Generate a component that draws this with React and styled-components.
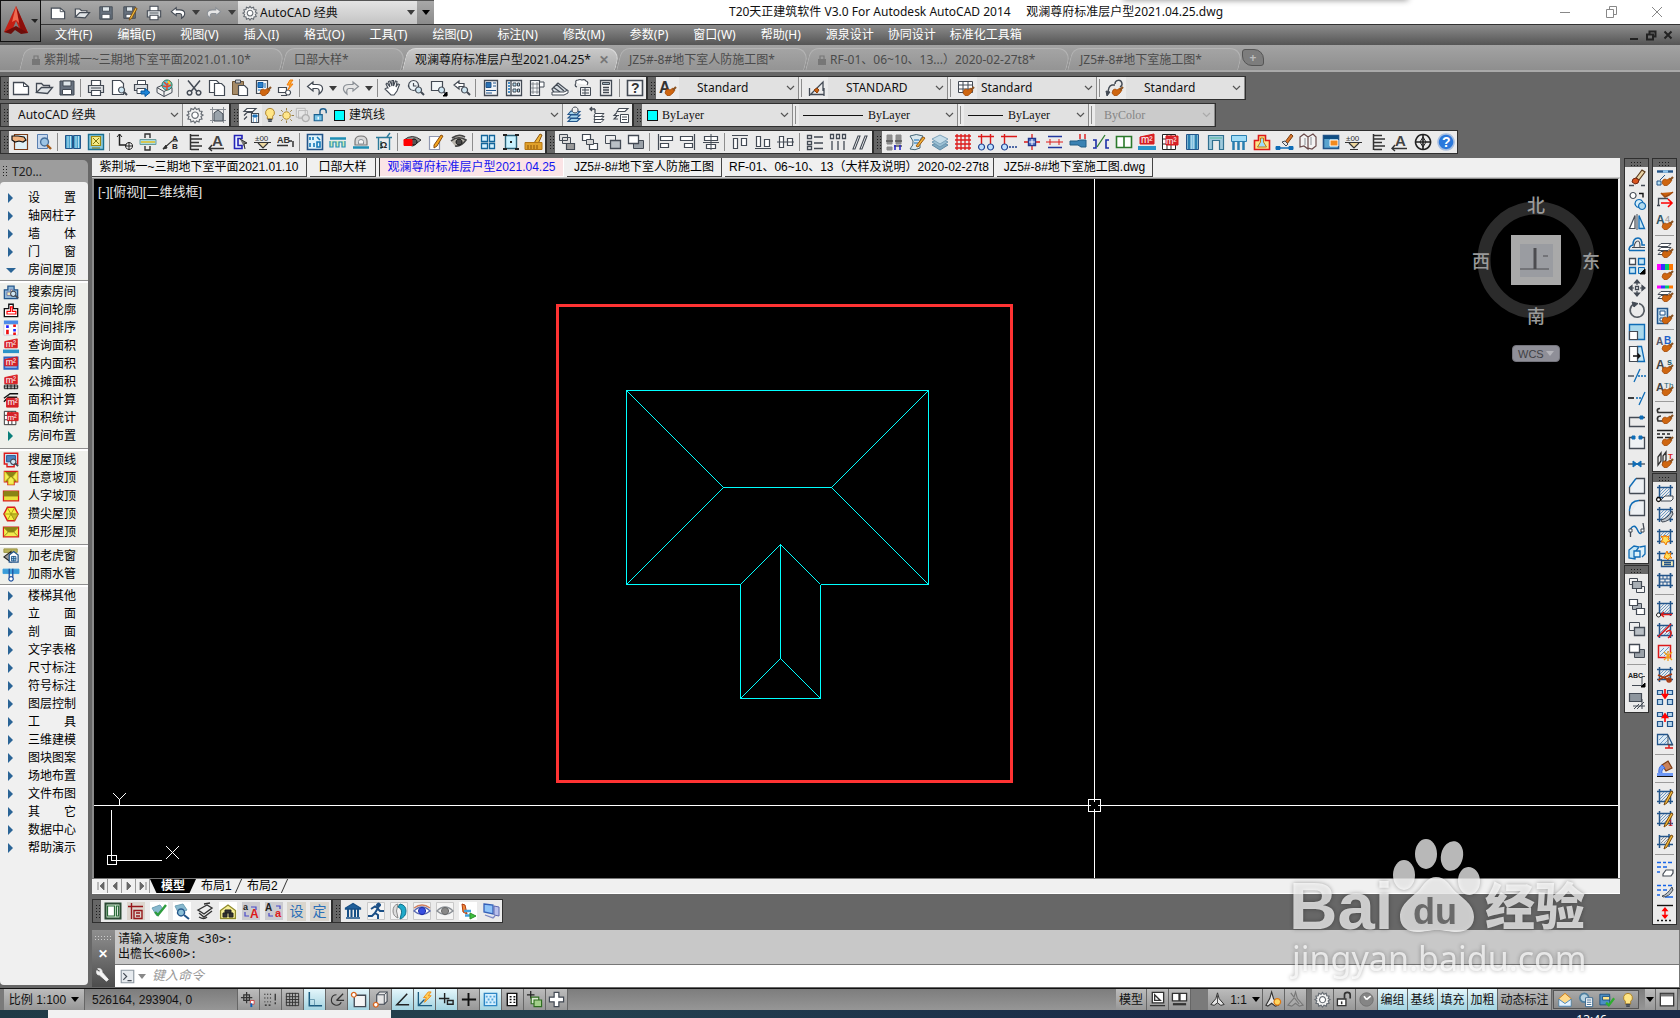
import React from "react";
import styled, { createGlobalStyle, css } from "styled-components";

const UI_FONT = `"Noto Sans", "Noto Sans CJK SC", sans-serif`;
const SONG_FONT = `"Liberation Sans", "Noto Sans CJK SC", sans-serif`;

const K = "#434a54";
const B = "#0f6cb6";
const N = "#23558a";
const L = "#b9e0f2";
const R = "#dc1a1a";
const G = "#8b9096";
const W = "#ffffff";
const GN = "#2c7a2c";

// every shape is [d, stroke, fill, strokeWidth], or { t, x, y, s, c } for a letter
const BRUSH = [
  ["M6 14l1-3 2-1 2 1 3-2 2 2-2 3-3 2.500H8z", "#a34a08", "#cf6610", 0.8],
  ["M14 11l3-3", "#8a5424", "none", 2.2],
];
const LENS = [
  ["M11.500 8a3 3 0 1 0 .1 0z", K, "#cfe6f2", 1.2],
  ["M14 13l3 3", K, "none", 2],
];
const FRAME = [
  ["M3.500 1v15M14.500 1v15M1 3.500h16M1 13.500h16", N, "none", 1.5],
  ["M4 8l4-4M4 11l7-7M5 13l9-9M8 13l6-6M11 13l3-3", "#6c98c4", "none", 1],
];
const PENCIL = [["M9 14l6-11 2 1-6 11-3 2z", "#7a4a10", "#f2bd3c"]];
const M2 = [
  ["M2 4l14-3v10H2z", R, "#d5222a"],
  { t: "m²", x: 3, y: 10, s: 10, c: W },
];
const SQUARES = [
  ["M1.500 2.500h8v6h-8z", K, "#f4f4f4"],
  ["M8.500 10.500h8v6h-8z", K, "#f4f4f4"],
];
const LAYERS = [["M5 2.500h10l-3 3H2zM5 6.500h10l-3 3H2zM5 10.500h10l-3 3H2z", K, W]];

const ICONS = {
  new: [["M1.500 3.500h10l5 4v8h-15z", K, W, 1.3], ["M11.500 3.500v4h5", K]],
  open: [["M1.500 13.500v-9h5l2 2h6v2", K, "#eee", 1.3], ["M1.500 13.500l5-5h11l-5 6z", K, "#dfe3e6", 1.3]],
  save: [["M2 2h14v14H2z", K, "#67717e"], ["M5 2h8v5H5z", K, "#dfe6ea"], ["M4.500 10.500h9v5h-9z", K, W]],
  saveas: [["M2 2h13v13H2z", K, "#67717e"], ["M5 2h7v5H5z", K, "#dfe6ea"], ["M4.500 10.500h8v4h-8z", K, W], ...PENCIL],
  print: [["M4.500 7V1.500h9V7", K, W, 1.2], ["M1.500 6.500h15v7h-15z", K, "#dde0e3", 1.2], ["M4.500 11.500h9v5h-9z", K, W, 1.2], ["M4 9h10", K]],
  preview: [["M2.500 1.500h8l3 3v11h-11z", K, W, 1.2], ...LENS],
  publish: [["M4.500 6V1.500h8V6", K, W], ["M1.500 5.500h13v6h-13z", K, "#dde0e3", 1.2], ["M4 9.500h8v5H4z", K, W], ["M8 12h4v-2.500l5 4-5 4V15H8z", "#0758a0", "#1b83d6"]],
  globe: [["M1 8.500l7-3 8 3v5l-8 4-7-4z", K, "#f0f0f0"], ["M1 8.500l7 4 8-4M8 12.500v5", K], ["M11 1a5 5 0 1 0 .1 0z", "#27784e", "#62c2df"], ["M8 3l3 3 3-4M11 6v5M7 7l4 1 4-2", "#e4492a", "none", 1.5], ["M12 2l2 3", "#f4d42d", "none", 2]],
  cut: [["M3 1.500l9 11M15 1.500l-9 11", K, "none", 1.5], ["M4.500 11.500a2.300 2.300 0 1 0 .1 0zM13.500 11.500a2.300 2.300 0 1 0 .1 0z", K, "none", 1.5]],
  copy: [["M1.500 1.500h7l3 3v9h-10z", K, W, 1.2], ["M6.500 4.500h7l3 3v9h-10z", K, W, 1.2]],
  paste: [["M1.500 2.500h11v13h-11z", "#6d5333", "#a58a66"], ["M4.500 1h5v3h-5z", K, "#ccc"], ["M7.500 6.500h6l3 3v7h-9z", K, W, 1.2]],
  match: [["M2.500 1.500h11v13h-11z", K, "#f5f7f9", 1.2], ["M4 3.500h5v5H4z", "#0b5aa4", "#2a7fca"], ["M11 4v5M4 11h4", B], ...BRUSH],
  blockedit: [["M1.500 8.500h8v5h-8zM4 16.500h6", K, W, 1.2], ["M11 11a2.500 2.500 0 1 0 .1 0z", K, W, 1.2], ["M13 1l-3 5h3l-2 5 5-6h-3l3-4z", "#ef7b10", "#ffae2a"]],
  undo: [["M7 3L1.500 7.500 7 12V9.500h4q3 0 2 5.500 4-3 3.500-6Q16 5.500 11 5.500H7z", K, W, 1.2]],
  redo: [["M11 3l5.500 4.500L11 12V9.500H7q-3 0-2 5.500Q1 12 1.500 9 2 5.500 7 5.500h4z", G, "#e6e6e6", 1.2]],
  hand: [["M4 9L2 5l1-1 3 4L4.500 2.500 6 2l2 5V1.500h1.500V7l2-5 1.500.500L12 8l2-3 1.500.500L13 12l-3 4H7L1 10l1.500-1z", K, W, 1.1]],
  zoomrt: [["M6.500 1.500a5 5 0 1 0 .1 0zM6.500 4v3h3", K, "#eef3f6", 1.2], ...LENS],
  zoomwin: [["M1.500 2.500h11v9h-11z", K, "#f2f6f8", 1.2], ...LENS, ["M17 13v4h-4z", "#000", "#000"]],
  zoomprev: [["M6 2L1 6l5 4V7.500h5v-3H6z", K, W, 1.2], ...LENS],
  props: [["M2.500 1.500h13v15h-13z", K, "#f3f5f7", 1.3], ["M4 3.500h5v5H4z", N, "#2a72b5"], ["M11 4h3M11 7h3M4 11.500h10M4 14h6", N]],
  center: [["M1.500 1.500h15v15h-15zM6 2v14", K, "#f6f8fa", 1.3], ["M3 4h2M3 7h2M3 10h2M3 13h2", B, "none", 1.5], ["M8 4h3v3H8zM12.500 4h2v3h-2zM8 10h3v3H8zM12.500 10h2v3h-2z", K, L]],
  palette: [["M2.500 1.500h9v15h-9z", K, "#f6f8fa", 1.2], ["M4 4h2v2H4zM8 4h2v2H8zM4 8h2v2H4zM8 8h2v2H8zM4 12h2v2H4zM8 12h2v2H8z", G, "#d8dde2"], ["M12 3h4v5h-4", K, W]],
  sheet: [["M1 10l6-6 9 7-3 4H4zM2 8l7 5M5 5l8 7", K, "#d6dce1", 1.2], ["M1 13h12l4-2v3l-4 2H1z", K, W]],
  markup: [["M2 4q-1-3 2-3 2-1 4 0 3-1 4 1 3 1 1 4M2 4q-2 3 1 4", K, W, 1.2], ["M6.500 8.500h10v8h-10zM8 11h7M8 14h7M11 9v7", K, "#f0f0f0"]],
  calc: [["M3.500 1.500h11v15h-11z", K, "#f4f4f4", 1.3], ["M5.500 3.500h7v2h-7z", K, "#9fb0bc"], ["M6 8.500h6M6 11h6M6 13.500h6", K, "none", 1.4]],
  help: [["M1.500 1.500h15v15h-15z", K, "#f7f7f7", 1.6], { t: "?", x: 5, y: 14, s: 14, c: "#333", b: true }],
  astyle: [{ t: "A", x: 0, y: 14, s: 16, c: "#333", b: true }, ...BRUSH],
  dimstyle: [["M1 15.500h15M1.500 9v8M16 9v8M3 15l12-12v9", K, "none", 1.3], ["M6 11l3-2 2 2-2 3z", "#8f3f08", "#c9600f"]],
  tablestyle: [["M1.500 2.500h14v11h-14zM2 6h13M2 10h13M6 3v10M11 3v10", K, W], ...BRUSH],
  leaderstyle: [["M2 15q0-8 4-9h3M9 5a3.500 3.500 0 1 1 5 3", K, "none", 1.4], ["M0 12l4 1-3 4z", K, K], ...BRUSH],
  gear: [["M9 1.500l1.500 2 2.500-1 .500 2.500 2.500.500-1 2.500 2 1-2 1.500 1 2.500-2.500.500-.500 2.500-2.500-1L9 17l-1.500-2-2.500 1-.500-2.500L2 13l1-2.500-2-1.500 2-1-1-2.500L4.500 5 5 2.500l2.500 1z", "#666c73", "#f3f3f3", 1.2], ["M9 6a3.200 3.200 0 1 0 .1 0z", "#666c73", W, 1.2]],
  wssave: [["M1 3.500h16M1 14.500h16M3.500 1v16M14.500 1v16", G, "none", 1], ["M5 15V7l4-3 5 4v7z", K, "#9aa3ab"]],
  layerprop: [["M5 2.500h9l-3 3H2zM5 6.500h6M2 9.500l3-3M2 13.500l3-3", K, W, 1.2], ["M9.500 7.500h7v9h-7z", K, W, 1.2], ["M11 9h4v2h-4zM11 13h1M14 13h1M11 15h1M14 15h1", "#1769ad", "#2a82cc"]],
  bulb: [["M9 1.500a5 5 0 0 0-3 9v3h6v-3a5 5 0 0 0-3-9z", "#a77a20", "#ffe585"], ["M6.500 14h5M7 16h4", K, "none", 1.6]],
  sun: [["M9 4.500a4.500 4.500 0 1 0 .1 0z", "#b08a2c", "#ffe68a", 1.2], ["M9 0v3M9 15v3M0 9h3M15 9h3M2.500 2.500l2 2M13.500 13.500l2 2M2.500 15.500l2-2M13.500 4.500l2-2", "#9a8248", "none", 1.2]],
  vpfreeze: [["M1.500 1.500h10v10h-10zM4 4h10v9H4z", "#b6b6b6", "#e6e6e6"], ["M12 8.500a4 4 0 1 0 .1 0z", "#b0b0b0", "#ddd", 1.5]],
  unlock: [["M2.500 8.500h9v7h-9z", "#1b5f8e", "#79c5e8", 1.3], ["M9 8V5q0-3 3.500-3T16 5v2", "#1b5f8e", "none", 1.6], ["M7 11v3", W, "none", 1.5]],
  laystate: [["M5 5l9 .500-3 3H2zM5 9h9l-3 3H2zM5 12.500h9l-3 3H2z", N, "#a7d5ec", 1.1], ["M9 1a3 3 0 1 0 .1 0z", K, "#eee"]],
  layprev: [["M6 7.500h9l-3 3H5zM6 10.500h9l-3 3H5zM6 13.500h9l-3 3H5z", K, W, 1], ["M1 3h5M3 1L1 3l2 2M6 3v4", K, "none", 1.3]],
  layman: [["M7 2.500h9l-3 3H5zM5 6.500l-3 3h5M5 10l-3 3h4", K, W, 1.1], ["M8.500 8.500h8v8h-8zM10 11h5M10 13.500h5", K, W]],
  handcard: [["M2.500 1.500h13v15h-13z", "#7a3c18", "#dff0f7", 1.2], ["M0 3h6l6 1 2 3-3 2-4-1-4 1-3-2z", "#111", "#f2b37f", 1.2]],
  findcard: [["M2.500 1.500h10v14h-10z", "#5a7fb0", "#c5d8ee"], ["M9.500 5a4 4 0 1 0 .1 0z", "#456f9c", "#9dc5e5", 1.4], ["M12 12l4 4", "#a35a18", "none", 2.4]],
  columns: [["M1.500 2.500h7v13h-7zM9.500 2.500h7v13h-7z", N, "#4ba3cc"], ["M4 3v12M6.500 3v12M12 3v12M14.500 3v12", L, "none", 1]],
  colbox: [["M1.500 1.500h15v15h-15z", "#1b6f91", "#8bc9dc", 1.4], ["M4.500 3.500h9v9h-9z", "#a08a10", "#f6ec88", 1.2], ["M6 5l6 6M12 5l-6 6M5 15h8", "#7d7510"]],
  axis: [["M3.500 1v11h7", "#222", "none", 1.5], ["M1 4l2.500-3L6 4", "#222"], ["M13 9.500a3.500 3.500 0 1 0 .1 0zM13 9v8M9 13h8", "#222"]],
  beam: [["M1 6.500h16v5H1z", "#6b9c9c", "#a7dbe2"], ["M2 9h14", "#d6c654", "none", 2], ["M6 5V1h5v4M6 13v4h5v-4", "#333", "none", 1.4]],
  aleader: [["M1 16l9-8h6", "#333", "none", 1.2], ["M1 16l3-4 1 3z", "#333", "#333"], { t: "A", x: 10, y: 8, s: 8, c: "#222", b: true }, { t: "B", x: 10, y: 16, s: 8, c: "#222", b: true }],
  eline: [["M5.500 1v16M6 2.500h8M6 6h11M6 9.500h8M6 13h11M6 16.500h8", "#333", "none", 1.5]],
  auline: [{ t: "A", x: 4, y: 13, s: 15, c: "#444", b: true }, ["M1 15.500h15M4 12l-3 3.500L4 18", "#333", "none", 1.4]],
  bluearrow: [["M11 2.500H3.500v13H11v-3H7v-7h4z", "#2424b8", "#e8f2ff", 1.6], ["M9 6l7 4-3 1 1 5", "#333", "#777"]],
  elev: [{ t: "±00", x: 1, y: 8, s: 8, c: "#333" }, ["M0 9.500h17", "#333"], ["M4 10l5 5 5-5M5 16.500h8", "#333", "#eed8a0", 1.2]],
  abtag: [{ t: "AB", x: 0, y: 10, s: 9, c: "#333", b: true }, ["M0 12.500h11M12 8h3M16 8v6", "#333", "none", 1.5]],
  planwin: [["M1.500 1.500h15v15h-15z", N, "#dff3fb", 1.6], ["M4 4v3M7 4v3M4 10v4M8 10v4M11 4l3 3M11 9h3v5h-3z", "#147ab8", "none", 1.6]],
  wave: [["M1 5.500h16", "#1f8fb5", "none", 2.5], ["M1 8v6h3V9h3v5h3V9h3v5h3V8", "#1f8fb5", "#cfe9b2", 1.2]],
  lamp: [["M3 12V8q0-5 6-5t6 5v4z", "#777", "#d8d8d8", 1.2], ["M6.500 11V8.500q0-2 2.500-2t2.500 2V11z", G, "#f4f4f4"], ["M1 14.500h16", "#1f8fb5", "none", 2.5]],
  omega: [["M1 4.500h16M3.500 5v12M14.500 5v12M6 16V8M12 4l3-4", "#2b7a9a", "none", 1.4], { t: "Ω", x: 5, y: 15, s: 9, c: "#222", b: true }],
  redeye: [["M0 7q8-7 17 0l-8 6-5-1z", "#333", "#8f8d8a"], ["M10 6a3 3 0 1 0 .1 0z", "#111", "#555"], ["M0 6.500h8v6H0z", "#f00", "#f00"]],
  notepen: [["M2.500 3.500h10v13h-10z", "#8f97b0", W, 1.2], ["M7 12l7-10 2 1-6 10-3 2z", "#8a4d0f", "#f4a51e"]],
  eye: [["M1 8q7-6 15-1-5 7-11 6M2 5q7-5 13-1", "#444", "#b9b5ac", 1.6], ["M9 6a3 3 0 1 0 .1 0z", "#111", "#4a4a4a"]],
  fourwin: [["M2.500 2.500h6v6h-6zM10.500 2.500h5v6h-5zM2.500 10.500h6v5h-6zM10.500 10.500h5v5h-5z", "#12659a", "#d3f1ff", 1.3]],
  dotbox: [["M3.500 2.500h11v13h-11z", "#2a6177", "#c9f2ff", 1.4], ["M1 2h4M1 16h4M13 2h4M13 16h4M9 8v2", "#222", "none", 2]],
  broom: [["M9 10l6-9 2 1-4 9z", "#8b5208", "#efb73c"], ["M0 9.500h17v7H0z", "#b57614", "#e0a02a"], ["M3 12v4M6 12v4M9 12v4M12 12v4", "#8b5208"]],
  front1: [["M1.500 1.500h8v6h-8zM4.500 4.500h8v6h-8z", K, "#ddd"], ["M8.500 10.500h8v6h-8z", K, "#999", 1.2]],
  front2: [["M1.500 1.500h8v6h-8zM8.500 10.500h8v6h-8z", K, W, 1.2], ["M5.500 6.500h7v5h-7z", K, "#d5d5d5"]],
  front3: [["M1.500 2.500h10v8h-10z", K, "#eee"], ["M6.500 7.500h10v8h-10z", K, "#b9bfc5", 1.3]],
  front4: [["M6.500 7.500h10v8h-10z", K, "#9aa1a8"], ["M1.500 2.500h10v8h-10z", K, W, 1.3]],
  alignl: [["M2.500 1v16M4.500 3.500h12v4h-12zM4.500 10.500h8v4h-8z", K, W, 1.2]],
  alignr: [["M15.500 1v16M1.500 3.500h12v4h-12zM5.500 10.500h8v4h-8z", K, W, 1.2]],
  alignc: [["M2.500 3.500h13v4h-13zM4.500 11.500h9v4h-9z", K, W, 1.2], ["M9 1v16M1 9.500h16", K]],
  alignt: [["M1 2.500h16M2.500 5.500h4v10h-4zM10.500 5.500h5v7h-5z", K, W, 1.2]],
  alignb: [["M1 15.500h16M2.500 3.500h4v10h-4zM10.500 6.500h5v7h-5z", K, W, 1.2]],
  alignm: [["M2.500 3.500h4v11h-4zM10.500 5.500h5v7h-5z", K, W, 1.2], ["M0 9h17", K]],
  distl: [["M1.500 2.500h4v3h-4zM1.500 8.500h4v3h-4zM1.500 13.500h4v3h-4zM8 4h9M8 10h9M8 15.500h9", K, W, 1.3]],
  distt: [["M1.500 1.500h3v4h-3zM7.500 1.500h3v4h-3zM13.500 1.500h3v4h-3zM3 8v9M9 8v9M15 8v9", K, W, 1.3]],
  slashes: [["M1 16l5-13h2L3 16zM8 16l5-13h2l-5 13z", K, W, 1.1]],
  graycols: [["M2 2h5v9H2zM11 2h5v9h-5zM2 14h5v3H2z", "#888", "#8e8e8e"], ["M1 8h7M10 8h7M9 13h8", "#555", "none", 1.5], ["M10 12v5M15 12v5", "#22c", "none", 1.5]],
  scroll: [["M2 3q6-3 13 0l-3 4v8q-5 3-10 1 4-4 3-8z", "#467", "#dbe9ee"], ["M6 7h5M6 10h5", B], ["M8 13l7-9 2 1-7 9z", "#a05a10", "#f0b23a"]],
  stack: [["M1 12l8-4 8 4-8 5z", "#5f8aa6", "#7fa9c0"], ["M1 9l8-4 8 4-8 5z", "#6f98b2", "#9cc1d4"], ["M1 6l8-4 8 4-8 5z", "#7fa4bb", "#c5dde9"]],
  redgrid: [["M3 1v16M7 1v16M11 1v16M15 1v16M1 3h16M1 7h16M1 11h16M1 15h16", R, "none", 1.3]],
  redaxis2: [["M1 3.500h16M4.500 1v10M13.500 1v10", R, "none", 1.4], ["M4.500 11a3 3 0 1 0 .1 0zM13.500 11a3 3 0 1 0 .1 0z", "#1d3f8f", "#bfe1ff", 1.2]],
  redaxis1: [["M1 3.500h16M4.500 1v10", R, "none", 1.4], ["M4.500 11a3 3 0 1 0 .1 0z", "#1d3f8f", "#bfe1ff", 1.2], ["M9 14h2M12 14h2M15 14h2", "#1d3f8f", "none", 1.4]],
  cross: [["M9 1v16M1 9h16", R, "none", 1.3], ["M5.500 5.500h7v7h-7z", "#22388f", "#5b79c9", 1.4], ["M9 6v6M6 9h6", W]],
  dashline: [["M2 3.500h14M2 14.500h14", "#22389f", "none", 1.6], ["M0 9h17M4 6v6M13 6v6", R]],
  pipeline: [["M1 8h7l3-1h6v7h-5l-3-2H1z", "#235e86", "#3b82b3"], ["M11 1v5M16 1v5", R, "none", 1.4]],
  bracket: [["M1 7h3v8H1M17 7h-3v8h3", "#1d2fa8", "none", 1.6], ["M5 14L13 2", GN, "none", 1.3]],
  twobox: [["M1.500 3.500h15v11h-15zM9 3.500v11", GN, W, 1.6]],
  m2: [...M2, ["M0 15h18", "#2a93c9", "none", 4]],
  m2grid: [["M1.500 1.500h13v15h-13zM2 6h13M2 11h13M6 2v14M10 2v14", "#222", W], ["M5 3h12v9H5z", R, "#d5222a"], { t: "m²", x: 5, y: 11, s: 9, c: W }],
  wcol1: [["M2.500 1.500h12v15h-12z", N, "#cdeaf5"], ["M5 2v14M12 2v14", "#2a7fb0", "none", 3], ["M8.500 2v14", "#7fbfe0", "none", 2]],
  wcol2: [["M1.500 16.500v-14h15v14h-4v-9h-7v9z", "#31708f", "#9fc9dc", 1.2], ["M3 5h12", "#5b9", "none", 1]],
  wcol3: [["M1.500 2.500h15v6h-15z", "#2a7fb0", "#9fdcf7"], ["M3.500 8v9M8.500 8v9M13.500 8v9", "#2a7fb0", "none", 2.5]],
  stamp: [["M5.500 7.500v-5h7v5h4v9h-15v-9z", R, "#fbe58a", 1.6], ["M7.500 5v4l-3 5h9l-3-5V5z", "#c07a10", "#9fdcf7"]],
  brushline: [["M9 9l6-8 2 2-6 8z", "#7a4010", "#d8742c"], ["M6 9l3-1 3 3-2 2z", K, "#e6e6e6"], ["M0 15h17", B, "none", 1.5], ["M0 13.500h4v3H0zM13 13.500h4v3h-4z", B, B]],
  book: [["M1 4l4-3 4 3v12l-4-3-4 1zM9 4l5-3 3 3v9l-4 3-4-1z", "#6a4b4b", "#f3f3f3", 1.2], ["M6 5v7M12 4v8", G]],
  winorange: [["M1.500 2.500h15v13h-15z", N, "#5aa4cf", 1.6], ["M2 4.500h14", "#0f4f84", "none", 3], ["M8 7h8v6H8z", "#fff", "#f28a1e"]],
  circlecross: [["M9 1.500a7.500 7.500 0 1 0 .1 0zM9 1v16M1 9h16", "#222", "none", 1.6], ["M6 9l3-5 3 5-3 5z", "#222", "none", 1]],
  qmark: [["M9 1a8 8 0 1 0 .1 0z", "#a9bfe0", "#2a78dc", 1.6], { t: "?", x: 5, y: 14, s: 14, c: W, b: true }],
  erase: [["M8 9l6-8 3 2-6 8z", "#5c3b1c", "#e9d3a5", 1.2], ["M5 10l3-1 3 2-1 3-3 1-3-2z", "#6d2410", "#d9551f"], ["M1 16.500h5M13 16.500h4", K, "none", 1.3]],
  copyobj: [["M5 1.500a3 3 0 1 0 .1 0z", K, W, 1.2], ["M11 2.500h4v4", "#111", "none", 1.4], ["M11 8.500a4 4 0 1 0 .1 0z", B, "#d5edf8", 1.2], ["M14 11.500a3.500 3.500 0 1 0 .1 0z", B, "#b2dbf0", 1.2]],
  mirror: [["M7 2.500L1.500 15.500H7z", K, W, 1.2], ["M9 1v16", K], ["M11 2.500l5.500 13H11z", B, "#c6e6f5", 1.3]],
  offset: [["M1 15.500h16M1 15q0-4 4-5 0-7 5-7 4 0 4 7h3", B, "none", 1.5], ["M4 12.500h13M6 12q1-6 4-6 2 0 2 6", K, "none", 1.1]],
  array: [["M1.500 1.500h6v6h-6z", K, W, 1.3], ["M10.500 1.500h6v6h-6zM1.500 10.500h6v6h-6z", B, "#c6e6f5", 1.3], ["M10.500 10.500h6v6h-6z", B, L], ["M17 12v5h-5z", "#000", "#000"]],
  move: [["M7.500 7.500h3v3h-3z", K, W, 1.3], ["M9 1l2.500 3h-5zM9 17l2.500-3h-5zM1 9l3-2.500v5zM17 9l-3-2.500v5zM9 3v3M9 12v3M3 9h3M12 9h3", K, K, 1.2]],
  rotate: [["M6 3a7 7 0 1 0 5-.500", "#555b62", "none", 1.7], ["M4 1l6 1.500L6 6z", K, K]],
  scale: [["M1.500 1.500h15v15h-15z", B, "#a9d8ec", 1.4], ["M1.500 8.500h8v8h-8z", K, W, 1.2]],
  stretch: [["M9.500 1.500h4l3 15h-7z", B, "#c6e6f5", 1.3], ["M1.500 1.500h8v15h-8z", K, W, 1.2], ["M5 11h7M9.500 8.500L12 11l-2.500 2.500", "#111", "none", 1.4]],
  trim: [["M0 9h6", K, "none", 1.4], ["M6 15l6-13", B, "none", 1.3], ["M10 9h2M13 9h2M16 9h2", B, "none", 1.3]],
  extend: [["M0 9h6", "#111", "none", 1.6], ["M8 9h2M11 9h2", B, "none", 1.4], ["M11 16l6-13", B, "none", 1.3]],
  breakpt: [["M17 6.500H1.500v9H17", K, "none", 1.3], ["M12 5h3v3h-3z", B, B]],
  breakobj: [["M5 4.500H1.500v11h15v-11H13", K, "#eef1f4", 1.3], ["M4 3h3v3H4zM11 3h3v3h-3z", B, B]],
  join: [["M0 9h17", K, "none", 1.3], ["M5 6l4 3-4 3zM13 6L9 9l4 3z", B, B]],
  chamfer: [["M1.500 16.500V10M8 1.500h8.500v15h-15", K, "#eef1f4", 1.3], ["M1.500 10L8 1.500", B, "none", 1.4]],
  fillet: [["M1.500 16.500V12M11 1.500h5.500v15h-15", K, "#eef1f4", 1.3], ["M1.500 12q0-10 9.500-10.500", B, "none", 1.4]],
  blend: [["M2.500 16V9M16 8l-1-6", K, "none", 1.3], ["M2.500 8q4-6 7 1t5 0", B, "none", 1.4], ["M1 8h3v3H1zM13 8h3v3h-3z", K, W]],
  explode: [["M1 7l5-4 5 1-3 4-1 8-6-1z", B, "#c6e6f5", 1.3], ["M12 4l5-1v8l-3 3M6 8h6v6H6z", B, "#dff2fa", 1.3]],
  abcnote: [{ t: "ABC", x: 0, y: 8, s: 7, c: "#222", b: true }, ["M4 15.500h10v-9h3", K], ["M17 13v4h-4z", "#000", "#000"]],
  hatchback: [["M1.500 1.500h12v8h-12z", K, "#8d959d", 1.2], ["M5 14h12M14 7v10M9 17l7-7M6 17l5-5", K]],
  b1: [["M1 2.500h16", N, "none", 2.4], ["M7 2.500h5", "#8fc4ee", "none", 2.4], ["M1 12h4v4H1zM4 11l5-5", N, L], ...BRUSH],
  b2: [["M5 2l4 4 4-2 4-3", "#a04a0c", "#c9600f", 1.5], ["M2.500 15V7.500H12M1 14.500h3", K, "none", 1.3], ["M5 12h11M12 8l4 4-4 4", "#f00", "none", 1.6]],
  b3: [{ t: "A", x: 0, y: 11, s: 12, c: "#2f5566", b: true }, { t: "4", x: 9, y: 9, s: 9, c: "#999" }, ...BRUSH],
  b4: [...LAYERS, ...BRUSH],
  b5: [["M1 4h4", "#f0f", "none", 6], ["M5 4h4", "#33f", "none", 6], ["M9 4h4", "#0c6", "none", 6], ["M13 4h4", "#f70", "none", 6], ...BRUSH],
  b6: [["M1 2h4", "#f0f", "none", 3], ["M5 2h4", "#33f", "none", 3], ["M9 2h4", "#0c6", "none", 3], ["M13 2h4", "#f70", "none", 3], ["M5 6.500h10l-3 3H2zM5 10.500h10l-3 3H2z", K, W], ...BRUSH],
  b7: [["M1.500 1.500h10v15h-10z", N, "#c5dff0", 1.5], ["M4 4h5v4H4zM4 11h4v3H4z", N, W], ...BRUSH],
  b8: [{ t: "A", x: 0, y: 10, s: 10, c: "#556", b: true }, { t: "B", x: 8, y: 9, s: 10, c: "#1c5fc8", b: true }, ...BRUSH],
  b9: [{ t: "A", x: 0, y: 12, s: 12, c: "#444", b: true }, { t: "s", x: 11, y: 8, s: 9, c: "#1d6070", b: true }, ...BRUSH],
  b10: [{ t: "A", x: 0, y: 12, s: 11, c: "#444", b: true }, { t: "Th", x: 8, y: 9, s: 8, c: "#1d6070" }, ...BRUSH],
  b11: [["M4 1.500Q0 1.500 2 5.500h15M5 9Q0 9 2 14h8", "#333", "none", 1.7], ...BRUSH],
  b12: [["M1 1.500h16M1 5h3M6 5h3M11 5h3M1 8.500h6M9 8.500h6", "#222", "none", 1.3], ...BRUSH],
  b13: [["M2 14V6l3-4v8zM7 13V5l3-4v8z", "#333", "none", 1.3], { t: "T", x: 12, y: 8, s: 8, c: R, b: true }, ...BRUSH],
  h1: [...FRAME, ["M5 16l4-4h8v3l-2 2H5z", K, "#f3f3f3"], ["M2.500 13.500a2 2 0 1 0 .1 0z", "#111", W, 1.3]],
  h2: [...FRAME, ["M5 14q6-1 11-9l1 3q-4 8-11 8z", K, "#b9c1c9"]],
  h3: [...FRAME, ["M9 7l1 2 3-1-1 3 2 2-3 1-1 3-2-3-3 0 2-3-2-3 3 1z", "#f07800", "#ffdf5a"]],
  h4: [["M3.500 1v9M14.500 1v4M1 3.500h16M1 10h5", N, "none", 1.5], ["M11 1l1 3 3-1-1 3 2 2h-3l-1 2-2-2-2 0 1-3z", "#f07800", "#ffdf5a"], ["M5.500 10.500h12v6h-12zM8 12.500h7M8 14.500h7", N, "#f7edb8", 1.3]],
  h5: [["M3.500 1v15M14.500 1v15M1 3.500h16M1 13.500h16", N, "none", 1.7], ["M4 7h10M4 10h10M7 4v3M11 4v3M9 7v3M7 10v3M11 10v3", N]],
  h6: [...FRAME, ["M4 14.500h12M8 12l-3 2.500 3 2.500", R, "none", 1.3], ["M2.500 13a2 2 0 1 0 .1 0z", "#111", W]],
  h7: [...FRAME, ["M2 15L15 2M10 10q4-3 5 0t-3 6", R, "none", 1.5]],
  h8: [["M2.500 1.500h12v12h-12z", R, "#e4eef6", 1.5], ["M4 8l4-4M4 12l9-9M8 12l5-5", "#6c98c4"], ["M8 8l8 8M16 8l-8 8M12 7v10", "#f5a21c", "none", 1.3]],
  h9: [...FRAME, ["M2 9l13 6M2 14l14-6M13 12a2 2 0 1 0 .1 0z", "#a8380f", "none", 1.7]],
  h10: [["M1.500 2.500h5v4h-5zM11.500 2.500h5v4h-5zM1.500 11.500h5v5h-5zM11.500 11.500h5v5h-5z", N, "#b6d5ec", 1.2], ["M9 1v8M6.500 6.500L9 10l2.500-3.500z", "#f00", "#f00", 1.6]],
  h11: [["M1.500 2.500h5v4h-5zM11.500 2.500h5v4h-5zM1.500 11.500h5v5h-5zM11.500 11.500h5v5h-5z", N, "#b6d5ec", 1.2], ["M9 12V5M6.500 7.500L9 4l2.500 3.500z", "#f00", "#f00", 1.6]],
  h12: [["M1.500 2.500h10l5 10h-15z", N, "#dcebf5", 1.3], ["M3 8l5-5M4 12l8-8M8 12l4-4", "#6c98c4"], ["M12 3v10h5", K], ["M9 16h8M13 13v3", R, "none", 1.4]],
  h13: [["M6 5l6-4 4 7-6 3z", "#7a3b16", "#c9825a", 1.2], ["M6 5q-4 2-3 9h3q-1-5 3-6z", "#3b6be0", "#6d98f5"], ["M1 14.500h16", "#6d98f5", "none", 3], ["M1 16.500h16", "#111"]],
  h14: [...FRAME, ...PENCIL],
  h15: [...FRAME, ...PENCIL, { t: "1", x: 12, y: 16, s: 9, c: R }],
  h16: [["M3.500 3v13M1 12.500h16M13 2v13M3 4.500h12", N, "none", 1.5], ["M5 8l3-3M5 11l6-6M8 11l5-5", G], ...PENCIL],
  h17: [["M1 2.500h4M7 2.500h3M12 2.500h4M1 7h4M7 7h4M1 12h3", "#1464e8", "none", 1.5], ["M7 14l3-4h7v3l-2 3H7z", K, W, 1.2]],
  h18: [["M1 3.500h4M7 3.500h3M12 3.500h4M1 8h4M7 8h4M1 13h3M9 15h8", "#1464e8", "none", 1.5], ["M6 14q5-1 10-9l1 3q-4 7-10 7z", K, "#b9c1c9"]],
  h19: [["M1 1.500h16", "#111", "none", 1.4], ["M1 16.500h2M5 16.500h2M9 16.500h2M13 16.500h2", "#111", "none", 1.4], ["M9 5v8M7 6.500L9 4l2 2.500zM7 11.500L9 14l2-2.500z", "#f00", "#f00", 1.4]],
  v1: [...SQUARES, ["M4.500 5.500h9v7h-9z", K, "#a9afb5", 1.2]],
  v2: [["M4.500 5.500h9v6h-9z", K, "#a9afb5"], ["M1.500 1.500h8v6h-8zM8.500 10.500h8v6h-8z", K, W, 1.2]],
  t1: [["M1.500 1.500h15v15h-15z", "#2b4a34", "#d6efd6", 2], ["M3.500 4v10h7V4zM12.500 4h2v10h-2z", "#2b6a3a", W, 1.2]],
  t2: [["M0 0h18v18H0z", "none", "#dcd6ce"], ["M4.500 1v16M1 4.500h15M7 8.500h8v8H7zM9 11h4M9 14h4", "#96171a", "none", 1.4]],
  t3: [["M0 0h18v18H0z", "none", "#fff"], ["M2 6l8-3 3 4-6 7z", "#6ea0b4", "#88b9cf"], ["M5 10l3 3 8-10", "#2f9d3e", "none", 2.4]],
  t4: [["M0 0h18v18H0z", "none", "#fff"], ["M2 4l8-2 4 6-8 4z", "#6ea0b4", "#88b9cf"], ["M8 7a3.500 3.500 0 1 0 .1 0z", N, "#8cc0d8", 1.3], ["M11 13l5 4", N, "none", 2]],
  t5: [["M2 8l9-5 5 3-8 6zM3 11l5 4 8-6", "#333", "#eee", 1.4], ["M8 2l6-1M3 15q5 3 8 0", "#333", "none", 1.3]],
  t6: [["M0 0h18v18H0z", "none", "#fff"], ["M1.500 8.500L9 3l7.500 5.500v8h-15z", "#8f8a2c", "#f6ef96", 1.3], ["M4 11h4v4H4zM10 11h4v4h-4zM6 8h6v3H6z", "#222", "#333"]],
  t7: [["M0 0h18v18H0z", "none", "#cbcbd0"], { t: "a", x: 1, y: 8, s: 9, c: "#222", b: true }, { t: "A", x: 8, y: 16, s: 12, c: R, b: true }, ["M3 10v4h4M9 5h5v3", "#4a4ac8", "none", 1.2]],
  t8: [["M0 0h18v18H0z", "none", "#cbcbd0"], { t: "A", x: 0, y: 9, s: 10, c: "#222", b: true }, { t: "a", x: 10, y: 15, s: 11, c: R, b: true }, ["M4 11v3h4M11 4h4v3", "#4a4ac8", "none", 1.2]],
  u1: [["M9 1.500L1.500 6v1h15V6zM2 16h14", "#164f86", "#1f5f9a", 1.3], ["M4 7v8M7.500 7v8M11 7v8M14 7v8", "#164f86", "none", 2]],
  u2: [["M.500.500h17v17H.500z", "#c9c9c9", "#f4f4f4"], ["M11.500 1a2 2 0 1 0 .1 0z", "#1b4f86", "#1b4f86"], ["M4 7l4-2.500 3 1.500-3 5 3 2v4M8 11l-3 3H1M11 7l2 2h4", "#1b4f86", "none", 2]],
  u3: [["M.500.500h17v17H.500z", "#c9c9c9", "#f4f4f4"], ["M8 2q-5 1-5 7 0 5 5 7-3-7 0-14z", "#888", "#ddd"], ["M10 2q6 1 6 7t-6 8l1-4q2-6-3-8z", "#0d6f8a", "#1fa9c9"]],
  u4: [["M.500.500h17v17H.500z", "#c9c9c9", "#f4f4f4"], ["M1 9q8-8 16 0-8 7-16 0z", "#5b6bb0", W, 1.4], ["M9 5.500a3.500 3.500 0 1 0 .1 0z", "#1c28a8", "#3950e0"], ["M1 6q8-6 16 0", "#d08060", "none", 1.4]],
  u5: [["M.500.500h17v17H.500z", "#c9c9c9", "#f4f4f4"], ["M1 9q8-8 16 0-8 7-16 0z", G, "#eee", 1.4], ["M9 5.500a3.500 3.500 0 1 0 .1 0z", "#666", "#888"]],
  u6: [["M0 0h18v18H0z", "none", "#fff"], ["M3 2l3 1 2 9-4-2z", "#b03c10", "#f08a3a"], ["M5 9h7M6 13.500h5", "#44a3dc", "none", 2.4], ["M11 11l6 3-6 3z", "#2c8f2c", "#3cc23c"]],
  u7: [["M2 2l9 1v9l-9-2z", "#3560b8", "#8fc3f8", 1.3], ["M12 4l5 1v9l-5-1z", "#5d68b0", "#b9c0ec"], ["M3 13l8 3 2-2", "#7d88c0", "#cfd4f2", 1.3]],
  s1: [["M7 1v12M1 7h12M4 4h6v6H4z", "#333", "none", 1.3], ["M11 10h4v4h-4z", "#c44", W], ["M12 13v4", "#0a60b8", "none", 2]],
  s2: [["M3 3v1M6 3v1M9 3v1M3 7v1M6 7v1M9 7v1M3 11v1M6 11v1M9 11v1M14 3v7M14 12v2M3 15h2M7 15h2", "#222", "none", 1.2]],
  s3: [["M2.500 2.500h13v13h-13zM6 2v14M9 2v14M12 2v14M2 6h14M2 9h14M2 12h14", "#333", "none", 1]],
  s4: [["M3.500 1v14.500H17", "#1c5c80", "none", 1.6], ["M4 9h5v6", "#6b9bb0"]],
  s5: [["M9 4a5.500 5.500 0 1 0 5 8", "#333", "none", 1.2], ["M9 10l7-7M9 10h8", "#333", "none", 1.4]],
  s6: [["M4.500 4.500h12v12h-12z", K, "#f5f5f5", 1.4], ["M4 1.500a2.500 2.500 0 1 0 .1 0z", "#d9641b", W, 1.4]],
  s7: [["M5 4l3-3h8v10l-3 3H5z", K, "#e6e6e6", 1.2], ["M5 4h8v10M13 4l3-3", K], ["M4 12a2.500 2.500 0 1 0 .1 0z", "#d9641b", W, 1.4]],
  s8: [["M14 3L3 14.500h13", "#222", "none", 1.6]],
  s9: [["M2.500 1v14.500H17M3 15L9 9", "#1c5c80", "none", 1.4], ["M13 1l-5 6h3l-2 5 7-7h-3l3-4z", "#f08c10", "#ffd05a"]],
  s10: [["M7 2v11M1 8h11M10 10h6v4h-6z", "#222", "none", 1.5]],
  s11: [["M9 2v14M2 9h15", "#111", "none", 2]],
  s12: [["M2.500 2.500h13v13h-13z", "#2e86c4", "#d4efff", 1.5], ["M4 5h2v2H4zM8 5h2v2H8zM12 5h2v2h-2zM6 8h2v2H6zM10 8h2v2h-2zM4 11h2v2H4zM8 11h2v2H8zM12 11h2v2h-2z", "#56a8dc", "#56a8dc", 0]],
  s13: [["M3.500 2.500h10v13h-10z", "#111", W, 1.5], ["M6 6h2M10 6h2M6 9h2M10 9h2M6 12h2M10 12h2", "#111", "none", 1.5]],
  s14: [["M5 0v8M1 4h8", "#222", "none", 1.3], ["M5.500 6.500h8v7h-8z", "#2f6d1f", "#dcebd4", 1.2], ["M8.500 9.500h8v7h-8z", "#2f6d1f", "#a2cf8a", 1.2]],
  s15: [["M6.500 1.500h5v5h5v5h-5v5h-5v-5h-5v-5h5z", K, W, 1.3]],
  model: [["M3.500 1.500h12v11h-12z", "#333", W, 1.4], ["M1 15.500h16M6 4v6h6z", "#333", "none", 1.4]],
  layouts: [["M1.500 2.500h7v8h-7zM9.500 2.500h7v8h-7z", "#333", W, 1.4], ["M2 14h14", "#333", "none", 2.4]],
  annot: [["M9 1l2 7 6 7-4 1-4-3-4 3-4-1 6-7z", "#333", "#e7e7e7", 1.2], ["M9 4v9", "#333"]],
  annotsun: [["M7 1l2 7 5 7-3 1-4-3-4 3-2-1 4-7z", "#333", "#e7e7e7", 1.2], ["M13 8a3.500 3.500 0 1 0 .1 0z", "#e07a10", "#ffd760", 1.3]],
  annotoff: [["M9 1l2 7 6 7-4 1-4-3-4 3-4-1 6-7zM4 2l9 12", "#777", "#aaa", 1.2]],
  lockopen: [["M1.500 8.500h9v7h-9z", "#333", W, 1.4], ["M9 8V4q0-2.500 3-2.500t3 2.500v4", "#333", "none", 1.8], ["M6 11v3", "#333", "none", 1.6]],
  ball: [["M9 1a8 8 0 1 0 .1 0z", "#6d6d6d", "#858585"], ["M9 9L6 5M9 9l5-4", W, "none", 2]],
  mail: [["M2 7.500l7-6 7 6v8H2z", "#d07a10", "#ffd98a"], ["M2 8l7 5 7-5v8H2z", "#3d7fb8", "#e4f3ff"]],
  gearlist: [["M7 1.500a5 5 0 1 0 .1 0z", "#4f7f9f", "#b8d2e0", 2], ["M8.500 6.500h8v10h-8zM10 9h5M10 11.500h5M10 14h5", "#2c5f8a", W]],
  disk: [["M1 2.500h11v12H1z", "#1a4f80", "#4d8fc4"], ["M4 5h8v4H4z", "#1a4f80", "#ffe58a"], ["M8 12l3 3 6-8", "#2fae2f", "none", 2.6]],
  cleanscreen: [["M1.500 1.500h15v14h-15z", "#333", W, 1.4], ["M2 3.500h14", "#777", "none", 3]],
  room1: [["M1.500 6.500h4v-4h7v4h4v10h-15z", N, "#8fb8d8", 1.4], ["M4.500 9h4V6h2v7h-6z", "#77a", "#f2ecb4"], ...LENS],
  room2: [["M1.500 7.500h5v-5h5v5h5v9h-15z", "#111", W, 1.5], ["M4.500 10.500h4v-5h2v5h4v3h-10z", "#f00", W, 1.3]],
  room3: [["M1 1.500h16M1 3.500h16", "#4b8be8", "none", 2], ["M1 5h16v12H1z", "#c9c9d8", W], ["M5 6v3M13 10v3", "#22f", "none", 3], ["M5 11v5M13 5v3M13 14v3", "#e11", "none", 3]],
  room5: [["M1.500 1.500h15v13h-15z", "#2b63c4", "#7fa8e8", 2], ...M2],
  room6: [...M2, ["M1.500 12.500h15v4h-15zM5 12v5M9 12v5M13 12v5M1 14.500h16", "#111", W]],
  room7: [["M1 7l7-5h9M1 11l5-5h10", "#111", "none", 1.6], ["M4 7h13v10H4z", R, "#d5222a"], { t: "m²", x: 5, y: 15, s: 10, c: W }],
  roofsearch: [["M1.500 1.500h15v12h-4v3h-8v-3h-3z", R, "#cfe2f2", 1.6], ["M4 4h10v7H4z", N, "#4c82c0"], ...LENS],
  roofany: [["M1.500 1.500h15v12h-4v3h-7v-3h-4z", R, "#8a8416", 1.4], ["M2 2l5 6-5 5zM16 2l-5 6 5 5zM6 16V11l3-3 3 3v5z", "#d9d02a", "#f4ef55"]],
  roofv: [["M.500 3.500h17v11H.500z", R, "#e8e03a", 1.4], ["M1 4h16v5H1z", "#8a8416", "#8a8416"]],
  roofcone: [["M5 1.500h8l4 7.500-4 7.500H5L1 9z", R, "#f7f042", 1.6], ["M1 9h16M5 2l8 14M13 2L5 16", "#a39a14"], ["M13 9h4l-4 7-4-7z", "#a39a14", "#c7be2a"]],
  roofrect: [["M.500 3.500h17v11H.500z", R, "#f1ea4c", 1.4], ["M1 4l5 5h6l5-5z", "#8a8416", "#8a8416"], ["M1 14l5-5M17 14l-5-5", "#8a8416"]],
  dormer: [["M1 1h15v4H1z", "#9a9440", "#b8b25c"], ["M1 10l8-6v12z", "#222", "#999", 1.2], ["M7 16V8l5-4 5 4v8z", N, W, 1.4], ["M9.500 9.500h5v5h-5zM12 9v6M9 12h6", N, "#a9dbee", 1]],
  drain: [["M0 3.500h18v5H0z", "#3aa0dc", "#3a9bd8"], ["M7 3v10M11 3v10", "#1c4f9e", "none", 1.4], ["M9 12a2.500 2.500 0 1 0 .1 0z", "#1c4f9e", W, 1.4]],
  wrench: [["M3 2q5-1 5 4l7 8-2 2-8-7Q1 9 2 4l3 2 1-2z", "#eee", "#f5f5f5", 1]],
  prompt: [["M1.500 1.500h15v15h-15z", "#8f99a3", "#e7ebef", 1.4], ["M4 5l4 4-4 4M9 14h5", K, "none", 1.4]],
};

const Svg = styled.svg`
  display: block;
  flex: none;
  overflow: visible;
`;

const Icon = ({ name, size = 18 }) => (
  <Svg width={size} height={size} viewBox="0 0 18 18" aria-hidden="true">
    {(ICONS[name] || []).map((s, i) =>
      s.t ? (
        <text
          key={i}
          x={s.x}
          y={s.y}
          fontSize={s.s}
          fill={s.c}
          fontWeight={s.b ? 700 : 400}
          fontFamily="Liberation Sans, sans-serif"
        >
          {s.t}
        </text>
      ) : (
        <path key={i} d={s[0]} stroke={s[1]} fill={s[2] || "none"} strokeWidth={s[3] ?? 1} />
      )
    )}
  </Svg>
);

const GlobalStyle = createGlobalStyle`
  * { box-sizing: border-box; }
  body { margin: 0; background: #676767; }
  button, select, input {
    font: inherit;
    color: inherit;
    margin: 0;
    padding: 0;
    border: 0;
    border-radius: 0;
    background: none;
  }
`;

const Page = styled.div`
  position: relative;
  display: flex;
  flex-direction: column;
  height: 100vh;
  overflow: hidden;
  background: #676767;
  font: 12px/16px ${UI_FONT};
  color: #111;
`;

/* ---------- header ---------- */
const Header = styled.header`
  display: flex;
  flex: none;
  height: 45px;
  background: linear-gradient(#909090 24px, #8a8a8a 25px, #555 45px);
`;
const AppButton = styled.button`
  display: flex;
  align-items: center;
  justify-content: center;
  flex: none;
  width: 41px;
  height: 42px;
  border: 1px solid #111;
  background: linear-gradient(#9c9c9c, #6e6e6e);
`;
const HeaderRows = styled.div`
  flex: 1;
  min-width: 0;
`;
const TitleRow = styled.div`
  display: flex;
  height: 24px;
  background: #fff;
`;
const QuickBar = styled.div`
  display: flex;
  align-items: center;
  padding-left: 5px;
  background: linear-gradient(#a8a8a8, #8b8b8b);
  border-top: 1px solid #555;
`;
const QuickButton = styled.button`
  display: flex;
  align-items: center;
  justify-content: center;
  width: ${(p) => p.$width || 24}px;
  height: 22px;
`;
const QuickSelect = styled.label`
  display: flex;
  align-items: center;
  gap: 2px;
  width: 179px;
  height: 23px;
  padding: 0 2px 0 4px;
  background: linear-gradient(#e4e4e4, #c4c4c4);
  select {
    flex: 1;
    appearance: none;
  }
`;
const Title = styled.h1`
  flex: 1;
  margin: 0;
  padding-right: 24px;
  font-size: 12px;
  font-weight: 400;
  line-height: 23px;
  text-align: center;
  white-space: pre;
`;
const WindowButton = styled.button`
  display: flex;
  align-items: center;
  justify-content: center;
  width: 46px;
`;
const MenuRow = styled.nav`
  display: flex;
  align-items: center;
  height: 21px;
  padding: 0 6px 0 14px;
  border-top: 1px solid #333;
  background: linear-gradient(#8c8c8c, #555);
`;
const MenuItem = styled.button`
  color: #fff;
  margin-right: ${(p) => (p.$tight ? 14 : 25)}px;
  white-space: nowrap;
`;
const DocButtons = styled.div`
  display: flex;
  gap: 6px;
  margin-left: auto;
`;
const DropShade = styled.div`
  position: absolute;
  top: -6px;
  right: 272px;
  width: 285px;
  height: 6px;
  box-shadow: 0 0 6px #888;
`;

/* ---------- file tabs ---------- */
const FileTabs = styled.div`
  display: flex;
  align-items: flex-end;
  flex: none;
  height: 27px;
  padding-left: 20px;
  background: linear-gradient(#a3a3a3, #8e8e8e);
  border-bottom: 2px solid #a9a9a9;
`;
const FileTab = styled.button`
  position: relative;
  z-index: ${(p) => (p.$active ? 2 : 1)};
  display: flex;
  align-items: center;
  gap: 4px;
  min-width: ${(p) => p.$width}px;
  height: 22px;
  padding: 2px 0 0 12px;
  color: ${(p) => (p.$active ? "#111" : "#4b4b4b")};
  white-space: nowrap;
  &::before {
    content: "";
    position: absolute;
    z-index: -1;
    inset: 0 -1px 0 2px;
    border: 1px solid ${(p) => (p.$active ? "#d8d8d8" : "#b4b4b4")};
    border-bottom: 0;
    border-radius: 8px 14px 0 0;
    background: ${(p) => (p.$active ? "linear-gradient(#c9c9c9, #aaa)" : "linear-gradient(#a4a4a4, #949494)")};
    transform: skewX(-14deg);
  }
`;
const TabClose = styled.span`
  margin-left: 4px;
  color: #777;
  font-weight: 700;
`;
const AddTab = styled.button`
  width: 22px;
  height: 17px;
  margin: 0 0 4px 2px;
  border: 1px solid #555;
  border-radius: 3px 10px 3px 10px;
  background: #7d7d7d;
  color: #bbb;
  font-weight: 700;
  line-height: 14px;
`;

/* ---------- toolbars ---------- */
const ToolRows = styled.div`
  display: flex;
  flex-direction: column;
  flex: none;
  gap: 3px;
  padding: 4px 0;
`;
const ToolRow = styled.div`
  display: flex;
`;
const Bar = styled.div`
  display: flex;
  flex-direction: ${(p) => (p.$vertical ? "column" : "row")};
  align-items: center;
  flex: none;
  border: 1px solid #2f2f2f;
  background: #ebebeb;
  ${(p) => (p.$vertical ? "width: 25px;" : "height: 24px;")}
`;
const Grip = styled.span`
  flex: none;
  align-self: stretch;
  background: radial-gradient(circle, #1c1c1c 0 1px, transparent 1px) 0 0 / 3px 3px content-box, #666;
  ${(p) => (p.$vertical ? "height: 8px; padding: 2px 5px 1px;" : "width: 8px; padding: 4px 1px 4px 2px;")}
`;
const ToolButton = styled.button`
  display: flex;
  align-items: center;
  justify-content: center;
  flex: none;
  width: 23px;
  height: 22px;
`;
const DropButton = styled(ToolButton)`
  width: 13px;
`;
const Divider = styled.span`
  flex: none;
  ${(p) =>
    p.$vertical
      ? css`
          width: 19px;
          height: 2px;
          margin: 2px 0;
          border-top: 1px solid #9b9b9b;
        `
      : css`
          width: 2px;
          height: 18px;
          margin: 0 2px;
          border-left: 1px solid #8d8d8d;
        `}
`;
const Combo = styled.label`
  display: flex;
  align-items: center;
  flex: none;
  gap: 1px;
  width: ${(p) => p.$width}px;
  height: 22px;
  padding-right: 3px;
  border-right: 1px solid #8b8b8b;
  background: ${(p) => (p.$off ? "#cbcbcb" : "#e1e1e1")};
  color: ${(p) => (p.$off ? "#858585" : "#111")};
  font-family: ${(p) => (p.$serif ? '"Liberation Serif", serif' : "inherit")};
  select {
    flex: 1;
    min-width: 0;
    height: 20px;
    padding-left: ${(p) => p.$indent || 0}px;
    appearance: none;
    opacity: 1;
  }
`;
const ColorChip = styled.span`
  flex: none;
  width: 11px;
  height: 11px;
  margin: 0 3px 0 5px;
  border: 1px solid #111;
  background: #0ff;
`;
const LineSample = styled.span`
  flex: none;
  width: ${(p) => p.$width}px;
  height: 1px;
  margin: 0 4px;
  background: #111;
`;

const Chevron = ({ off }) => (
  <Svg width="9" height="6" viewBox="0 0 9 6" aria-hidden="true">
    <path d="M1 1l3.500 3.500L8 1" fill="none" stroke={off ? "#aaa" : "#555"} strokeWidth="1.2" />
  </Svg>
);
const Caret = ({ color = "#3c3c3c" }) => (
  <Svg width="8" height="5" viewBox="0 0 8 5" aria-hidden="true">
    <path d="M0 0h8L4 5z" fill={color} />
  </Svg>
);

const Toolbar = ({ items, vertical, children }) => (
  <Bar $vertical={vertical}>
    <Grip $vertical={vertical} />
    {items &&
      items.map((name, i) => {
        if (name === "|") return <Divider key={i} $vertical={vertical} />;
        if (name === "v")
          return (
            <DropButton key={i} aria-label="展开">
              <Caret />
            </DropButton>
          );
        return (
          <ToolButton key={i} aria-label={name}>
            <Icon name={name} />
          </ToolButton>
        );
      })}
    {children}
  </Bar>
);

const Tool = ({ name }) => (
  <ToolButton aria-label={name}>
    <Icon name={name} />
  </ToolButton>
);

const Picker = ({ width, label, value, indent, serif, off, children }) => (
  <Combo $width={width} $indent={indent} $serif={serif} $off={off}>
    {children}
    <select aria-label={label} disabled={off}>
      <option>{value}</option>
    </select>
    <Chevron off={off} />
  </Combo>
);

/* ---------- work area ---------- */
const Work = styled.div`
  display: flex;
  flex: 1;
  min-height: 0;
  gap: 4px;
`;
const Side = styled.aside`
  display: flex;
  flex-direction: column;
  flex: none;
  width: 88px;
  margin: 2px 0 3px;
`;
const SideHead = styled.div`
  display: flex;
  align-items: center;
  gap: 4px;
  height: 27px;
  padding: 2px 0 5px;
  border-radius: 0 5px 0 0;
  background: #9d9d9d;
  color: #222;
`;
const SideGrip = styled.span`
  width: 8px;
  height: 14px;
  background: radial-gradient(circle, #222 0 1px, transparent 1px) 0 0 / 3px 3px content-box;
  padding: 0 1px 2px 2px;
`;
const SideBody = styled.div`
  flex: 1;
  min-height: 0;
  margin-top: -5px;
  padding-top: 7px;
  border-radius: 4px 4px 4px 4px;
  background: #f0f0f0;
`;
const SideGroup = styled.div`
  background: ${(p) => (p.$open ? "#eff0eb" : "transparent")};
`;
const SideLine = styled.div`
  height: ${(p) => (p.$thin ? 4 : 6)}px;
  padding-top: ${(p) => (p.$thin ? 1 : 3)}px;
  background: #eff0eb;
  &::before {
    content: "";
    display: block;
    height: 2px;
    border-top: 1px solid #8f8f8f;
    background: #fff;
  }
`;
const SideItem = styled.button`
  display: flex;
  align-items: center;
  width: 100%;
  height: 18px;
  color: #000;
  font-family: ${SONG_FONT};
  white-space: pre;
`;
const SideMark = styled.span`
  display: flex;
  justify-content: center;
  width: 22px;
  margin-right: 6px;
`;

const Main = styled.main`
  display: flex;
  flex-direction: column;
  flex: 1;
  min-width: 0;
  gap: 4px;
  padding-bottom: 1px;
`;
const Upper = styled.div`
  display: flex;
  flex: 1;
  min-height: 0;
`;
const Center = styled.div`
  display: flex;
  flex-direction: column;
  flex: 1;
  min-width: 0;
  padding-bottom: 3px;
`;
const DocTabs = styled.div`
  display: flex;
  flex: none;
  gap: 3px;
  height: 20px;
  background: #f0f0f0;
  border-bottom: 1px solid #c8c8c8;
  font-family: ${SONG_FONT};
`;
const DocTab = styled.button`
  width: ${(p) => p.$width}px;
  height: 19px;
  overflow: hidden;
  white-space: nowrap;
  border-right: 1px solid #444;
  border-bottom: 1px solid #444;
  background: ${(p) => (p.$active ? "#fbe4e6" : "#f0f0f0")};
  color: ${(p) => (p.$active ? "#1414f0" : "#000")};
  ${(p) => p.$active && "border-color: #fff; border-left: 1px solid #333;"}
`;
const Canvas = styled.div`
  position: relative;
  flex: 1;
  min-height: 0;
  overflow: hidden;
  border: solid #8a8a8a;
  border-width: 1px 2px 0 2px;
  border-right-color: #f0f0f0;
  background: #000;
`;
const Drawing = styled.svg`
  display: block;
  width: 100%;
  height: 100%;
`;
const ViewLabel = styled.div`
  position: absolute;
  top: 5px;
  left: 4px;
  color: #e6e6e6;
  font: 13px/16px ${SONG_FONT};
`;
const Compass = styled.svg`
  position: absolute;
  top: 11px;
  right: 12px;
  font-family: "Noto Sans CJK SC", sans-serif;
`;
const Wcs = styled.button`
  position: absolute;
  top: 166px;
  right: 58px;
  display: flex;
  align-items: center;
  justify-content: space-between;
  width: 48px;
  height: 17px;
  padding: 0 5px;
  border: 1px solid #74747c;
  border-radius: 4px;
  background: #8f8f98;
  color: #3f3f44;
  font: 11px/14px "Liberation Sans", sans-serif;
`;
const LayoutTabs = styled.div`
  display: flex;
  flex: none;
  height: 16px;
  margin-bottom: 5px;
  padding-left: 2px;
  background: #f0f0f0;
  border-top: 1px solid #777;
  border-bottom: 1px solid #fff;
  font-family: ${SONG_FONT};
`;
const NavButton = styled.button`
  display: flex;
  align-items: center;
  justify-content: center;
  width: 14px;
  border-right: 1px solid #999;
  background: #f0f0f0;
`;
const LayoutTab = styled.button`
  position: relative;
  width: 46px;
  height: 14px;
  padding-left: ${(p) => (p.$active ? 0 : 5)}px;
  color: ${(p) => (p.$active ? "#fff" : "#000")};
  font-weight: ${(p) => (p.$active ? 700 : 400)};
  line-height: 14px;
  text-align: ${(p) => (p.$active ? "center" : "left")};
  white-space: nowrap;
  ${(p) =>
    p.$active
      ? "clip-path: polygon(0 0, 100% 0, 86% 100%, 14% 100%); background: #000;"
      : "&::after { content: ''; position: absolute; top: 0; right: 3px; height: 14px; border-right: 1px solid #333; transform: skewX(-24deg); }"}
`;
const Docks = styled.div`
  display: flex;
  flex: none;
  gap: 3px;
  padding: 0 3px 0 4px;
  overflow: hidden;
`;
const Dock = styled.div`
  display: flex;
  flex-direction: column;
  gap: 1px;
  ${ToolButton} {
    width: 22px;
  }
`;
const WordTool = styled(ToolButton)`
  width: 19px;
  height: 19px;
  margin: 0 2px;
  background: #d9d5cd;
  color: #2a6fb8;
  font-size: 14px;
`;

/* ---------- command line ---------- */
const Command = styled.section`
  display: grid;
  grid-template-columns: 23px 1fr;
  flex: none;
  height: 57px;
  border-right: 1px solid #777;
`;
const CommandSide = styled.div`
  display: flex;
  flex-direction: column;
  align-items: center;
  justify-content: space-between;
  padding: 5px 2px 4px 0;
  background: linear-gradient(#8f8f8f, #4c4c4c);
  color: #fff;
  font-weight: 700;
`;
const CommandDots = styled.span`
  width: 18px;
  height: 6px;
  background: radial-gradient(circle, #ccc 0 1px, transparent 1px) 0 0 / 3px 3px;
`;
const CommandBody = styled.div`
  display: flex;
  flex-direction: column;
  font-family: "DejaVu Sans Mono", "Noto Sans CJK SC", monospace;
`;
const History = styled.div`
  height: 35px;
  padding: 2px 3px;
  border-bottom: 1px solid #777;
  background: #c8c8c8;
  line-height: 15px;
  p {
    margin: 0;
  }
`;
const InputLine = styled.label`
  display: flex;
  align-items: center;
  flex: 1;
  gap: 3px;
  padding-left: 5px;
  background: #fff;
  input {
    flex: 1;
    margin-left: 3px;
    outline: 0;
  }
  input::placeholder {
    color: #999;
    font-style: italic;
    font-size: 13px;
  }
`;

/* ---------- status bar ---------- */
const Status = styled.footer`
  display: flex;
  flex: none;
  height: 22px;
  border-top: 1px solid #111;
  background: linear-gradient(#7d7d7d, #969696);
  font-family: ${SONG_FONT};
  white-space: nowrap;
`;
const StatusCell = styled.button`
  display: flex;
  align-items: center;
  justify-content: center;
  gap: 5px;
  width: ${(p) => p.$width || 22}px;
  border-right: 1px solid #666;
  background: ${(p) => (p.$on ? "linear-gradient(#e4f6fb, #a3d3e0)" : "linear-gradient(#bcbcbc, #979797)")};
`;
const Coords = styled.output`
  width: 153px;
  padding: 3px 7px;
  border-right: 1px solid #666;
`;
const Gap = styled.span`
  width: ${(p) => p.$width}px;
  background: #7a7a7a;
`;
const StatusRight = styled.div`
  display: flex;
  margin-left: auto;
  padding-right: 2px;
`;
const Tray = styled.div`
  display: flex;
  align-items: center;
  gap: 5px;
  width: 86px;
  margin: 1px 6px 1px 1px;
  padding: 0 3px;
  border: 1px solid #555;
  background: linear-gradient(#aaa, #8a8a8a);
`;
const Taskbar = styled.div`
  display: flex;
  flex: none;
  height: 8px;
  overflow: hidden;
  padding-left: 48px;
  background: linear-gradient(90deg, #1f3a46, #24414f 35%, #1a2a48 70%);
`;
const TaskWindow = styled.div`
  width: 343px;
  background: #f1f1f1;
`;
const Clock = styled.time`
  margin: 2px 73px 0 auto;
  color: #fff;
  line-height: 16px;
`;
const Watermark = styled.svg`
  position: absolute;
  right: 86px;
  bottom: 32px;
  filter: drop-shadow(0 0 2px rgba(0, 0, 0, 0.45));
  pointer-events: none;
`;

const MENUS = ["文件(F)", "编辑(E)", "视图(V)", "插入(I)", "格式(O)", "工具(T)", "绘图(D)", "标注(N)", "修改(M)", "参数(P)", "窗口(W)", "帮助(H)"];
const EXTRA_MENUS = ["源泉设计", "协同设计", "标准化工具箱"];

const FILES = [
  { name: "紫荆城一~三期地下室平面2021.01.10*", width: 262, lock: true },
  { name: "口部大样*", width: 121 },
  { name: "观澜尊府标准层户型2021.04.25*", width: 214, active: true },
  { name: "JZ5#-8#地下室人防施工图*", width: 189 },
  { name: "RF-01、06~10、13...）2020-02-27t8*", width: 262, lock: true },
  { name: "JZ5#-8#地下室施工图*", width: 172 },
];

const DOCS = [
  { name: "紫荆城一~三期地下室平面2021.01.10", width: 215 },
  { name: "口部大样", width: 66 },
  { name: "观澜尊府标准层户型2021.04.25", width: 185, active: true },
  { name: "JZ5#-8#地下室人防施工图", width: 155 },
  { name: "RF-01、06~10、13（大样及说明）2020-02-27t8", width: 269 },
  { name: "JZ5#-8#地下室施工图.dwg", width: 156 },
];

const STANDARD_TOOLS = ["new", "open", "save", "|", "print", "preview", "publish", "globe", "|", "cut", "copy", "paste", "match", "blockedit", "|", "undo", "v", "redo", "v", "|", "hand", "zoomrt", "zoomwin", "zoomprev", "|", "props", "center", "palette", "sheet", "markup", "calc", "|", "help"];
const TZ_TOOLS = ["handcard", "findcard", "|", "columns", "colbox", "|", "axis", "beam", "aleader", "eline", "auline", "bluearrow", "elev", "abtag", "|", "planwin", "wave", "lamp", "omega", "|", "redeye", "notepen", "eye", "|", "fourwin", "dotbox", "broom"];
const ALIGN_TOOLS = ["front1", "front2", "front3", "front4", "|", "alignl", "alignr", "alignc", "|", "alignt", "alignb", "alignm", "|", "distl", "distt", "slashes"];
const USER_TOOLS = ["graycols", "scroll", "stack", "redgrid", "redaxis2", "redaxis1", "cross", "dashline", "pipeline", "bracket", "twobox", "m2", "m2grid", "wcol1", "wcol2", "wcol3", "stamp", "brushline", "book", "winorange", "elev", "eline", "auline", "circlecross", "qmark"];
const MODIFY_TOOLS = ["erase", "copyobj", "mirror", "offset", "array", "move", "rotate", "scale", "stretch", "trim", "extend", "breakpt", "breakobj", "join", "chamfer", "fillet", "blend", "explode"];
const ORDER_TOOLS = ["v1", "v2", "front3", "front4", "|", "abcnote", "hatchback"];
const BRUSH_TOOLS = ["b1", "b2", "b3", "|", "b4", "b5", "b6", "b7", "|", "b8", "b9", "b10", "|", "b11", "b12", "b13"];
const HATCH_TOOLS = ["h1", "h2", "h3", "h4", "h5", "|", "h6", "h7", "h8", "h9", "h10", "h11", "h12", "|", "h13", "|", "h14", "h15", "h16", "|", "h17", "h18", "h19"];
const STATUS_TOOLS = ["s1", "s2", "s3", "s4", "s5", "s6", "s7", "s8", "s9", "s10", "s11", "s12", "s13", "s14", "s15"];
const STATUS_ON = ["s4", "s6", "s8", "s9", "s10", "s12"];

const TOP_GROUP = ["设　　置", "轴网柱子", "墙　　体", "门　　窗"];
const ROOM_GROUP = [
  ["room1", "搜索房间"],
  ["room2", "房间轮廓"],
  ["room3", "房间排序"],
  ["m2", "查询面积"],
  ["room5", "套内面积"],
  ["room6", "公摊面积"],
  ["room7", "面积计算"],
  ["m2grid", "面积统计"],
];
const ROOF_GROUP = [
  ["roofsearch", "搜屋顶线"],
  ["roofany", "任意坡顶"],
  ["roofv", "人字坡顶"],
  ["roofcone", "攒尖屋顶"],
  ["roofrect", "矩形屋顶"],
];
const EXTRA_GROUP = [
  ["dormer", "加老虎窗"],
  ["drain", "加雨水管"],
];
const BOTTOM_GROUP = ["楼梯其他", "立　　面", "剖　　面", "文字表格", "尺寸标注", "符号标注", "图层控制", "工　　具", "三维建模", "图块图案", "场地布置", "文件布图", "其　　它", "数据中心", "帮助演示"];

const Arrow = ({ open, color = "#2a6496" }) => (
  <Svg width="10" height="10" viewBox="0 0 10 10" aria-hidden="true">
    <path d={open ? "M0 3h10L5 8z" : "M2 0l5 5-5 5z"} fill={color} />
  </Svg>
);

const Folder = ({ name, open, color }) => (
  <SideItem>
    <SideMark>
      <Arrow open={open} color={color} />
    </SideMark>
    {name}
  </SideItem>
);

const Commands = ({ list }) =>
  list.map(([icon, name]) => (
    <SideItem key={name}>
      <SideMark>
        <Icon name={icon} size={16} />
      </SideMark>
      {name}
    </SideItem>
  ));

const SidePanel = () => (
  <Side>
    <SideHead>
      <SideGrip />
      T20...
    </SideHead>
    <SideBody>
      {TOP_GROUP.map((name) => (
        <Folder key={name} name={name} />
      ))}
      <Folder name="房间屋顶" open />
      <SideLine $thin />
      <SideGroup $open>
        <Commands list={ROOM_GROUP} />
        <Folder name="房间布置" color="#0b7f7a" />
        <SideLine />
        <Commands list={ROOF_GROUP} />
        <SideLine />
        <Commands list={EXTRA_GROUP} />
      </SideGroup>
      <SideLine $thin />
      {BOTTOM_GROUP.map((name) => (
        <Folder key={name} name={name} />
      ))}
    </SideBody>
  </Side>
);

const RoofPlan = () => (
  <Drawing aria-label="屋顶平面">
    <g transform="translate(-94 -179)" shapeRendering="crispEdges" fill="none">
      <rect x="557.5" y="305.5" width="454" height="476" stroke="#ff3333" strokeWidth="3" />
      <g stroke="#00ffff">
        <path d="M740.5 584.5h-114v-194h302v194h-108M740.5 584.5v114h80v-114M723.5 487.5h108M780.5 544.5v114" />
        <path d="M626.5 390.5l97 97-97 97M928.5 390.5l-97 97 97 97M740.5 584.5l40-40 40 40M740.5 698.5l40-40 40 40" />
      </g>
      <g stroke="#ffffff">
        <path d="M94 805.5h994M1101 805.5h700M1094.5 179v620M1094.5 812v90M1088.5 799.5h12v12h-12zM1088 805.5h3M1098 805.5h3M1094.5 799v3M1094.5 809v3" />
        <path d="M111.5 810v50.5H162M107.5 855.5h9v9h-9z" />
        <path d="M113 793l6.500 6.500 6.500-6.500M119.5 799.500v6M166 846l13 13M179 846l-13 13" />
      </g>
    </g>
  </Drawing>
);

const ViewCube = () => (
  <Compass width="140" height="140" viewBox="0 0 140 140" aria-label="方位">
    <circle cx="70" cy="70" r="52" fill="none" stroke="#2b2b2b" strokeWidth="13" />
    <rect x="45" y="45" width="50" height="50" fill="#a9a9a9" />
    <rect x="54" y="54" width="33" height="33" fill="#9a9ca1" />
    <path d="M69 58v21" stroke="#4c4c50" strokeWidth="3" fill="none" />
    <path d="M54 79h29M77 66h5" stroke="#4c4c50" strokeWidth="1" fill="none" />
    <g fill="#9a9a9a" fontSize="18" fontWeight="500" textAnchor="middle">
      <text x="70" y="22">北</text>
      <text x="15" y="78">西</text>
      <text x="125" y="78">东</text>
      <text x="70" y="133">南</text>
    </g>
  </Compass>
);

const BaiduMark = () => (
  <Watermark width="310" height="154" viewBox="0 0 310 154" aria-hidden="true">
    <g fill="#ffffff" opacity="0.72">
      <ellipse cx="120" cy="43" rx="11" ry="15" />
      <ellipse cx="142" cy="22" rx="11" ry="15" />
      <ellipse cx="168" cy="24" rx="11" ry="15" transform="rotate(12 168 24)" />
      <ellipse cx="185" cy="49" rx="11" ry="14" transform="rotate(-4 185 49)" />
      <path d="M152 45c9 0 13 7 17 12 7 8 21 14 21 28 0 10-8 15-17 15-8 0-13-2-20-2s-12 2-20 2c-9 0-17-5-17-15 0-14 13-20 20-28 4-5 8-12 16-12z" />
      <text x="5" y="97" fontSize="67" fontWeight="700" fontFamily="Liberation Sans, sans-serif">Bai</text>
      <text x="201" y="93" fontSize="50" fontWeight="900" fontFamily="Noto Sans CJK SC, sans-serif">经验</text>
      <text x="8" y="139" fontSize="34" fontFamily="Noto Sans, sans-serif">jingyan.baidu.com</text>
    </g>
    <text x="129" y="92" fontSize="36" fontWeight="700" fill="#6a6a6a" fontFamily="Liberation Sans, sans-serif">du</text>
  </Watermark>
);

const App = () => (
  <>
    <GlobalStyle />
    <Page>
      <Header>
        <AppButton aria-label="应用程序菜单">
          <Svg width="36" height="32" viewBox="0 0 36 32" aria-hidden="true">
            <path d="M13 1L1 27l7 1 5-12 5 11 7 1z" fill="#c41f14" />
            <path d="M13 1l5 26 7 1z" fill="#8b0f0b" />
            <path d="M13 1L9 17l4-2 3 3z" fill="#ef6a50" />
            <path d="M1 27l12-6 12 7-7 1-6-4-4 4z" fill="#6e0d0a" />
            <path d="M28 14h7l-3 4z" fill="#222" />
          </Svg>
        </AppButton>
        <HeaderRows>
          <TitleRow>
            <QuickBar>
              {["new", "open", "save", "saveas", "print", "undo"].map((name) => (
                <QuickButton key={name} aria-label={name}>
                  <Icon name={name} size={16} />
                </QuickButton>
              ))}
              <QuickButton $width={12} aria-label="放弃列表">
                <Caret />
              </QuickButton>
              <QuickButton aria-label="redo">
                <Icon name="redo" size={16} />
              </QuickButton>
              <QuickButton $width={12} aria-label="重做列表">
                <Caret />
              </QuickButton>
              <QuickSelect>
                <Icon name="gear" size={16} />
                <select aria-label="工作空间">
                  <option>AutoCAD 经典</option>
                </select>
                <Caret />
              </QuickSelect>
              <QuickButton $width={17} aria-label="自定义">
                <Caret color="#000" />
              </QuickButton>
            </QuickBar>
            <Title>{"T20天正建筑软件 V3.0 For Autodesk AutoCAD 2014     观澜尊府标准层户型2021.04.25.dwg"}</Title>
            {["M1 6.500h10", "M1.500 3.500h7v8h-7zM4.500 3V.500h7v8H9", "M1 1l10 10M11 1L1 11"].map((d) => (
              <WindowButton key={d} aria-label="窗口控制">
                <Svg width="12" height="12" viewBox="0 0 12 12">
                  <path d={d} fill="none" stroke="#888" />
                </Svg>
              </WindowButton>
            ))}
          </TitleRow>
          <MenuRow>
            {MENUS.map((name) => (
              <MenuItem key={name}>{name}</MenuItem>
            ))}
            {EXTRA_MENUS.map((name) => (
              <MenuItem key={name} $tight>
                {name}
              </MenuItem>
            ))}
            <DocButtons>
              {["M1 9h8", "M1 4.500h6v5H1zM3.500 4V1.500h6v5H8", "M1.500 1.500l7 7M8.500 1.500l-7 7"].map((d) => (
                <button key={d} aria-label="文档控制">
                  <Svg width="11" height="11" viewBox="0 0 11 11">
                    <path d={d} fill="none" stroke="#222" strokeWidth="2" />
                  </Svg>
                </button>
              ))}
            </DocButtons>
          </MenuRow>
        </HeaderRows>
      </Header>
      <DropShade />

      <FileTabs>
        {FILES.map((f) => (
          <FileTab key={f.name} $width={f.width} $active={f.active}>
            {f.lock && (
              <Svg width="8" height="10" viewBox="0 0 8 10" aria-hidden="true">
                <path d="M0 4h8v6H0z" fill="#777" />
                <path d="M2 4V1h4v3" stroke="#777" fill="none" strokeWidth="1.2" />
              </Svg>
            )}
            {f.name}
            {f.active && <TabClose>✕</TabClose>}
          </FileTab>
        ))}
        <AddTab aria-label="新建图形">+</AddTab>
      </FileTabs>

      <ToolRows>
        <ToolRow>
          <Toolbar items={STANDARD_TOOLS} />
          <Toolbar>
            <Tool name="astyle" />
            <Picker width={120} label="文字样式" value="Standard" indent={18} />
            <Divider />
            <Tool name="dimstyle" />
            <Picker width={120} label="标注样式" value="STANDARD" indent={18} />
            <Divider />
            <Tool name="tablestyle" />
            <Picker width={120} label="表格样式" value="Standard" indent={4} />
            <Divider />
            <Tool name="leaderstyle" />
            <Picker width={119} label="引线样式" value="Standard" indent={18} />
          </Toolbar>
        </ToolRow>
        <ToolRow>
          <Toolbar>
            <Picker width={174} label="工作空间" value="AutoCAD 经典" indent={9} />
            <Tool name="gear" />
            <Tool name="wssave" />
          </Toolbar>
          <Toolbar>
            <Tool name="layerprop" />
            <Picker width={301} label="图层" value="建筑线">
              <Icon name="bulb" size={16} />
              <Icon name="sun" size={15} />
              <Icon name="vpfreeze" size={16} />
              <Icon name="unlock" size={16} />
              <ColorChip />
            </Picker>
            <Tool name="laystate" />
            <Tool name="layprev" />
            <Tool name="layman" />
          </Toolbar>
          <Toolbar>
            <Picker width={151} label="颜色" value="ByLayer" serif>
              <ColorChip />
            </Picker>
            <Divider />
            <Picker width={159} label="线型" value="ByLayer" serif>
              <LineSample $width={60} />
            </Picker>
            <Divider />
            <Picker width={125} label="线宽" value="ByLayer" serif>
              <LineSample $width={35} />
            </Picker>
            <Divider />
            <Picker width={120} label="打印样式" value="ByColor" indent={9} serif off />
          </Toolbar>
        </ToolRow>
        <ToolRow>
          <Toolbar items={TZ_TOOLS} />
          <Toolbar items={ALIGN_TOOLS} />
          <Toolbar items={USER_TOOLS} />
        </ToolRow>
      </ToolRows>

      <Work>
        <SidePanel />
        <Main>
          <Upper>
            <Center>
              <DocTabs>
                {DOCS.map((d) => (
                  <DocTab key={d.name} $width={d.width} $active={d.active}>
                    {d.name}
                  </DocTab>
                ))}
              </DocTabs>
              <Canvas>
                <RoofPlan />
                <ViewLabel>[-][俯视][二维线框]</ViewLabel>
                <ViewCube />
                <Wcs>
                  WCS
                  <Caret color="#b4b4ba" />
                </Wcs>
              </Canvas>
              <LayoutTabs>
                {["M2 1v8M8 1v8L4 5z", "M7 1v8L3 5z", "M3 1v8l4-4z", "M8 1v8M2 1v8l4-4z"].map((d) => (
                  <NavButton key={d} aria-label="布局导航">
                    <Svg width="10" height="10" viewBox="0 0 10 10">
                      <path d={d} fill="#666" stroke="#666" strokeWidth="0.8" />
                    </Svg>
                  </NavButton>
                ))}
                <LayoutTab $active>模型</LayoutTab>
                <LayoutTab>布局1</LayoutTab>
                <LayoutTab>布局2</LayoutTab>
              </LayoutTabs>
              <ToolRow>
                <Toolbar items={["t1", "t2", "t3", "t4", "t5", "t6", "t7", "t8"]}>
                  <WordTool>设</WordTool>
                  <WordTool>定</WordTool>
                </Toolbar>
                <Toolbar items={["u1", "u2", "u3", "u4", "u5", "u6", "u7"]} />
              </ToolRow>
            </Center>
            <Docks>
              <Dock>
                <Toolbar vertical items={MODIFY_TOOLS} />
                <Toolbar vertical items={ORDER_TOOLS} />
              </Dock>
              <Dock>
                <Toolbar vertical items={BRUSH_TOOLS} />
                <Toolbar vertical items={HATCH_TOOLS} />
              </Dock>
            </Docks>
          </Upper>
          <Command>
            <CommandSide>
              <CommandDots />
              <span>✕</span>
              <Icon name="wrench" size={16} />
            </CommandSide>
            <CommandBody>
              <History>
                <p>请输入坡度角 &lt;30&gt;:</p>
                <p>出檐长&lt;600&gt;:</p>
              </History>
              <InputLine>
                <Icon name="prompt" size={15} />
                <Caret color="#888" />
                <input aria-label="命令" placeholder="键入命令" />
              </InputLine>
            </CommandBody>
          </Command>
        </Main>
      </Work>

      <Status>
        <Gap $width={4} />
        <StatusCell $width={81}>
          比例 1:100
          <Caret color="#000" />
        </StatusCell>
        <Coords>526164, 293904, 0</Coords>
        {STATUS_TOOLS.map((name) => (
          <StatusCell key={name} $on={STATUS_ON.includes(name)} aria-label={name}>
            <Icon name={name} size={17} />
          </StatusCell>
        ))}
        <StatusRight>
          <StatusCell $width={31}>模型</StatusCell>
          <StatusCell aria-label="model">
            <Icon name="model" size={17} />
          </StatusCell>
          <StatusCell aria-label="layouts">
            <Icon name="layouts" size={17} />
          </StatusCell>
          <Gap $width={17} />
          <StatusCell $width={55}>
            <Icon name="annot" size={15} />
            1:1
            <Caret color="#000" />
          </StatusCell>
          <StatusCell aria-label="annotation">
            <Icon name="annotsun" size={17} />
          </StatusCell>
          <StatusCell aria-label="annotation auto">
            <Icon name="annotoff" size={17} />
          </StatusCell>
          <Gap $width={5} />
          <StatusCell aria-label="workspace">
            <Icon name="gear" size={17} />
          </StatusCell>
          <StatusCell aria-label="lock">
            <Icon name="lockopen" size={17} />
          </StatusCell>
          <StatusCell aria-label="hardware">
            <Icon name="ball" size={15} />
          </StatusCell>
          {["编组", "基线", "填充", "加粗"].map((name) => (
            <StatusCell key={name} $width={30} $on>
              {name}
            </StatusCell>
          ))}
          <StatusCell $width={54}>动态标注</StatusCell>
          <Tray>
            <Icon name="mail" size={16} />
            <Icon name="gearlist" size={16} />
            <Icon name="disk" size={16} />
            <Icon name="bulb" size={16} />
          </Tray>
          <StatusCell $width={11} aria-label="more">
            <Caret color="#000" />
          </StatusCell>
          <StatusCell aria-label="clean screen">
            <Icon name="cleanscreen" size={16} />
          </StatusCell>
        </StatusRight>
      </Status>
      <Taskbar>
        <TaskWindow />
        <Clock>13:46</Clock>
      </Taskbar>
      <BaiduMark />
    </Page>
  </>
);

export default App;
